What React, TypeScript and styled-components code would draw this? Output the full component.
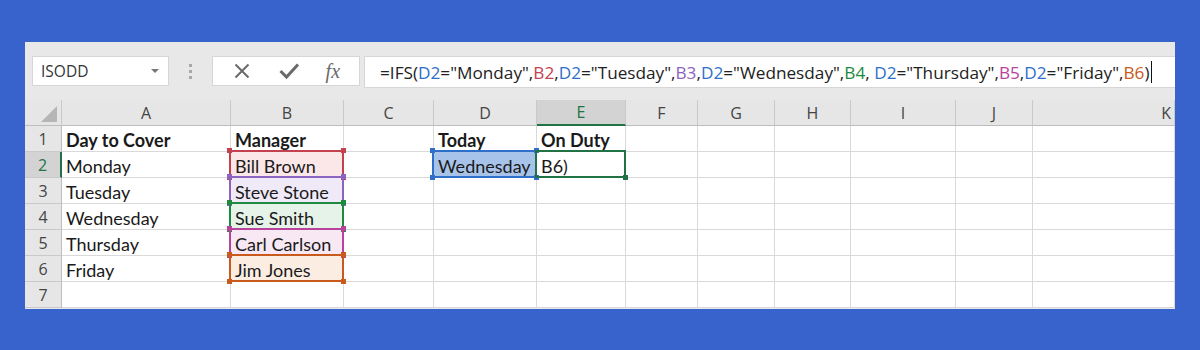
import React from "react";
import styled, { createGlobalStyle } from "styled-components";

const Global = createGlobalStyle`
  html, body { margin: 0; padding: 0; }
  body {
    background: #3863cc;
    width: 1200px;
    height: 350px;
    overflow: hidden;
  }
`;

const Page = styled.div`
  padding: 42px 25px 0 25px;
  height: 350px;
  box-sizing: border-box;
`;

const Window = styled.div`
  width: 1150px;
  height: 267px;
  background: #e8e8e8;
  overflow: hidden;
`;

const FormulaBar = styled.div`
  height: 58px;
  box-sizing: border-box;
  padding: 14px 0 0 7px;
  display: flex;
  align-items: flex-start;
`;

const NameBox = styled.div`
  width: 137px;
  height: 30px;
  box-sizing: border-box;
  background: #fff;
  border: 1px solid #d6d6d6;
  display: flex;
  align-items: center;
  justify-content: space-between;
  padding: 0 9px 0 8px;
  font-family: "Open Sans", "Noto Sans", sans-serif;
  font-size: 15.5px;
  color: #333;
`;

const Caret = styled.span`
  width: 0;
  height: 0;
  border-left: 4px solid transparent;
  border-right: 4px solid transparent;
  border-top: 4px solid #777;
`;

const Dots = styled.div`
  width: 43px;
  height: 30px;
  display: flex;
  flex-direction: column;
  align-items: center;
  justify-content: center;
  gap: 3px;
  span {
    width: 3px;
    height: 3px;
    background: #a8a8a8;
  }
`;

const IconBox = styled.div`
  width: 148px;
  height: 30px;
  box-sizing: border-box;
  background: #fff;
  border: 1px solid #d6d6d6;
  display: flex;
  align-items: center;
  justify-content: space-around;
  padding: 0 6px;
  color: #6a6a6a;
`;

const Fx = styled.span`
  font-family: "Liberation Serif", serif;
  font-style: italic;
  font-size: 20px;
  color: #6a6a6a;
  line-height: 1;
`;

const FormulaInput = styled.div`
  margin-left: 4px;
  flex: 1;
  height: 32px;
  box-sizing: border-box;
  background: #fff;
  border: 1px solid #d6d6d6;
  border-right: none;
  display: flex;
  align-items: center;
  padding-left: 15px;
  font-family: "Open Sans", "Noto Sans", sans-serif;
  font-size: 17.2px;
  color: #222;
  white-space: pre;
`;

const Ref = styled.span<{ $c: string }>`
  color: ${(p) => p.$c};
`;

const Cursor = styled.span`
  display: inline-block;
  width: 1px;
  height: 22px;
  background: #111;
  margin-left: 1px;
`;

const Grid = styled.div`
  display: grid;
  grid-template-columns: 37px 169px 113px 90px 103px 89px 72px 77px 76px 105px 77px 142px;
  grid-template-rows: repeat(8, 26px);
  background: #fff;
`;

const Corner = styled.div`
  background: #e6e6e6;
  border-right: 1px solid #c9c9c9;
  border-bottom: 1px solid #bdbdbd;
  box-sizing: border-box;
  position: relative;
  &::after {
    content: "";
    position: absolute;
    right: 4px;
    bottom: 3px;
    width: 0;
    height: 0;
    border-left: 16px solid transparent;
    border-bottom: 16px solid #b5b5b5;
  }
`;

const ColHead = styled.div<{ $sel?: boolean; $right?: boolean }>`
  background: ${(p) => (p.$sel ? "#d3d3d3" : "#e6e6e6")};
  border-right: 1px solid #c9c9c9;
  border-bottom: ${(p) => (p.$sel ? "2px solid #217346" : "1px solid #bdbdbd")};
  box-sizing: border-box;
  display: flex;
  align-items: center;
  justify-content: ${(p) => (p.$right ? "flex-end" : "center")};
  padding-right: ${(p) => (p.$right ? "3px" : "0")};
  font-family: "Open Sans", "Noto Sans", sans-serif;
  font-size: 16px;
  color: ${(p) => (p.$sel ? "#217346" : "#444")};
`;

const RowHead = styled.div<{ $sel?: boolean }>`
  background: ${(p) => (p.$sel ? "#d3d3d3" : "#e6e6e6")};
  border-right: ${(p) => (p.$sel ? "2px solid #217346" : "1px solid #bdbdbd")};
  border-bottom: 1px solid #c9c9c9;
  box-sizing: border-box;
  display: flex;
  align-items: center;
  justify-content: center;
  font-family: "Open Sans", "Noto Sans", sans-serif;
  font-size: 16px;
  color: ${(p) => (p.$sel ? "#217346" : "#444")};
`;

const Cell = styled.div<{ $bold?: boolean; $fill?: string }>`
  position: relative;
  border-right: 1px solid #d9d9d9;
  border-bottom: 1px solid #d9d9d9;
  box-sizing: border-box;
  background: ${(p) => p.$fill || "#fff"};
  display: flex;
  align-items: center;
  padding: 2px 0 0 4px;
  font-family: "Lato", "Open Sans", sans-serif;
  font-size: 18px;
  font-weight: ${(p) => (p.$bold ? 700 : 400)};
  color: #1a1a1a;
  white-space: nowrap;
`;

const Range = styled.div<{ $c: string }>`
  position: absolute;
  left: -2px;
  top: -2px;
  right: -1px;
  bottom: -1px;
  border: 2px solid ${(p) => p.$c};
  pointer-events: none;
  z-index: 2;
`;

const Handle = styled.span<{ $c: string; $pos: string }>`
  position: absolute;
  width: 5px;
  height: 5px;
  background: ${(p) => p.$c};
  ${(p) => (p.$pos.includes("t") ? "top: -4px;" : "bottom: -4px;")}
  ${(p) => (p.$pos.includes("l") ? "left: -4px;" : "right: -4px;")}
`;

const Active = styled.div`
  position: absolute;
  left: -2px;
  top: -2px;
  right: -1px;
  bottom: -1px;
  border: 2px solid #217346;
  z-index: 3;
  &::after {
    content: "";
    position: absolute;
    right: -4px;
    bottom: -4px;
    width: 5px;
    height: 5px;
    background: #217346;
  }
`;

const C = {
  blue: "#2f6fc9",
  red: "#c4414f",
  purple: "#8b63c0",
  green: "#1d8a3f",
  magenta: "#b8439a",
  orange: "#c75a1c",
};

const FILL: Record<string, string> = {
  [C.red]: "#fbe7e8",
  [C.purple]: "#f0eaf8",
  [C.green]: "#e6f3e9",
  [C.magenta]: "#f8e8f4",
  [C.orange]: "#fcede3",
  [C.blue]: "#a8c3ea",
};

function RangeBox({ c }: { c: string }) {
  return (
    <Range $c={c}>
      {["tl", "tr", "bl", "br"].map((p) => (
        <Handle key={p} $c={c} $pos={p} />
      ))}
    </Range>
  );
}

const cols = ["A", "B", "C", "D", "E", "F", "G", "H", "I", "J", "K"];

const rows: { a: string; b: string; bc?: string }[] = [
  { a: "Day to Cover", b: "Manager" },
  { a: "Monday", b: "Bill Brown", bc: C.red },
  { a: "Tuesday", b: "Steve Stone", bc: C.purple },
  { a: "Wednesday", b: "Sue Smith", bc: C.green },
  { a: "Thursday", b: "Carl Carlson", bc: C.magenta },
  { a: "Friday", b: "Jim Jones", bc: C.orange },
  { a: "", b: "" },
];

// pieces of the formula: [text, colour]
const formula: [string, string?][] = [
  ["=IFS("],
  ["D2", C.blue],
  ['="Monday",'],
  ["B2", C.red],
  [","],
  ["D2", C.blue],
  ['="Tuesday",'],
  ["B3", C.purple],
  [","],
  ["D2", C.blue],
  ['="Wednesday",'],
  ["B4", C.green],
  [", "],
  ["D2", C.blue],
  ['="Thursday",'],
  ["B5", C.magenta],
  [","],
  ["D2", C.blue],
  ['="Friday",'],
  ["B6", C.orange],
  [")"],
];

function X() {
  return (
    <svg width="20" height="20" viewBox="0 0 20 20">
      <path d="M3.5 3.5 L16.5 16.5 M16.5 3.5 L3.5 16.5" stroke="#6a6a6a" strokeWidth="2" fill="none" />
    </svg>
  );
}

function Check() {
  return (
    <svg width="22" height="20" viewBox="0 0 22 20">
      <path d="M2.5 10 L8.5 16 L20 3.5" stroke="#6a6a6a" strokeWidth="3" fill="none" />
    </svg>
  );
}

function App() {
  return (
    <>
      <Global />
      <Page>
        <Window>
          <FormulaBar>
            <NameBox>
              ISODD
              <Caret />
            </NameBox>
            <Dots>
              <span />
              <span />
              <span />
            </Dots>
            <IconBox>
              <X />
              <Check />
              <Fx>fx</Fx>
            </IconBox>
            <FormulaInput>
              {formula.map(([t, c], i) =>
                c ? (
                  <Ref key={i} $c={c}>
                    {t}
                  </Ref>
                ) : (
                  <span key={i}>{t}</span>
                )
              )}
              <Cursor />
            </FormulaInput>
          </FormulaBar>
          <Grid>
            <Corner />
            {cols.map((c) => (
              <ColHead key={c} $sel={c === "E"} $right={c === "K"}>
                {c}
              </ColHead>
            ))}
            {rows.map((r, i) => {
              const n = i + 1;
              return (
                <React.Fragment key={n}>
                  <RowHead $sel={n === 2}>{n}</RowHead>
                  <Cell $bold={n === 1}>{r.a}</Cell>
                  <Cell $bold={n === 1} $fill={r.bc ? FILL[r.bc] : undefined}>
                    {r.b}
                    {r.bc && <RangeBox c={r.bc} />}
                  </Cell>
                  <Cell />
                  <Cell $bold={n === 1} $fill={n === 2 ? FILL[C.blue] : undefined}>
                    {n === 1 ? "Today" : n === 2 ? "Wednesday" : ""}
                    {n === 2 && <RangeBox c={C.blue} />}
                  </Cell>
                  <Cell $bold={n === 1}>
                    {n === 1 ? "On Duty" : n === 2 ? "B6)" : ""}
                    {n === 2 && <Active />}
                  </Cell>
                  {cols.slice(5).map((c) => (
                    <Cell key={c} />
                  ))}
                </React.Fragment>
              );
            })}
          </Grid>
        </Window>
      </Page>
    </>
  );
}

export default App;
